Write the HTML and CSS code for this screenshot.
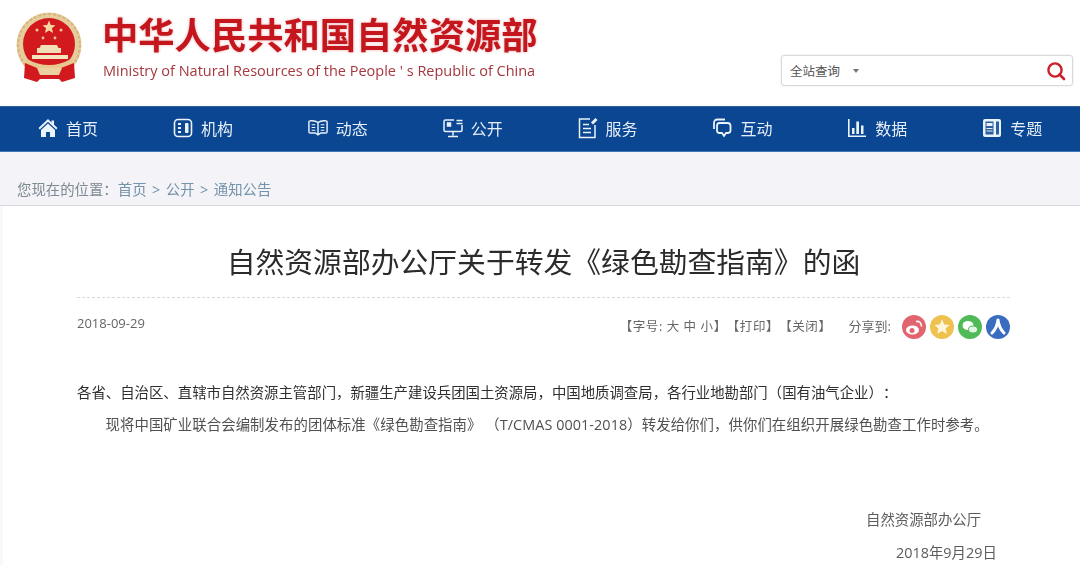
FILE: index.html
```html
<!DOCTYPE html>
<html lang="zh-CN">
<head>
    <meta charset="utf-8">
    <title>自然资源部办公厅关于转发《绿色勘查指南》的函</title>
    <link rel="stylesheet" href="styles.css">
</head>
<body>
    <header class="top">
        <div class="brand">
            <svg class="emblem" width="70" height="76" viewBox="0 0 70 76">
                <circle cx="33" cy="36" r="32.500" fill="#e6cd9e"/>
                <circle cx="33" cy="36" r="31" fill="none" stroke="#d6b47c" stroke-width="2" stroke-dasharray="3 2"/>
                <circle cx="33" cy="35" r="26" fill="#d2191d"/>
                <polygon points="33,11.500 34.800,16 39.500,16.300 35.900,19.300 37.100,24 33,21.400 28.900,24 30.100,19.300 26.500,16.300 31.200,16" fill="#f3d9a0"/>
                <circle cx="21" cy="21" r="1.500" fill="#efc990"/>
                <circle cx="45" cy="21" r="1.500" fill="#efc990"/>
                <circle cx="27" cy="29" r="1.400" fill="#efc990"/>
                <circle cx="39" cy="29" r="1.400" fill="#efc990"/>
                <path d="M25 36h16l1.500 3H45v5H21v-5h2.500z" fill="#f1dfb8"/>
                <path d="M16 46h36v4H16z" fill="#f5e4c0"/>
                <path d="M11 50q22 12 44 0l3 4-12 8H20L8 54z" fill="#e8c88e"/>
                <path d="M9 54l12 5h24l13-5 1 15-13 4-3-3H24l-3 3-13-4z" fill="#d2191d"/>
                <path d="M21 59h25l-3 7H24z" fill="#ecd0a0"/>
            </svg>
            <div class="brand-text">
                <div class="brand-cn">中华人民共和国自然资源部</div>
                <div class="brand-en">Ministry of Natural Resources of the People ' s Republic of China</div>
            </div>
        </div>
        <div class="search">
            <span class="search-label">全站查询</span>
            <span class="search-caret"></span>
            <svg class="search-icon" width="20" height="20" viewBox="0 0 20 20">
                <circle cx="9" cy="9" r="6.600" fill="none" stroke="#c9202b" stroke-width="2.400"/>
                <path d="M13.500 13.500l4.500 4.500" stroke="#c9202b" stroke-width="2.600" stroke-linecap="round"/>
            </svg>
        </div>
    </header>

    <nav class="nav">
        <a class="nav-item">
            <svg width="20" height="20" viewBox="0 0 20 20"><path d="M10 1L0.500 10l1.300 1.400L10 3.800l8.200 7.600 1.300-1.400L16 6.700V2.500h-2.500v1.900z" fill="#eaf2fa"/><path d="M10 5.500l-7 6.400V19h5v-5h4v5h5v-7.100z" fill="#eaf2fa"/></svg>
            <span>首页</span>
        </a>
        <a class="nav-item">
            <svg width="20" height="20" viewBox="0 0 20 20" fill="none" stroke="#eaf2fa"><rect x="1.500" y="1.500" width="17" height="17" rx="3.500" stroke-width="1.600"/><path d="M5 6h3M5 10h3M5 14h3" stroke-width="2"/><path d="M12.500 5.500h2.500v9h-2.500z" fill="#eaf2fa" stroke-width="1"/></svg>
            <span>机构</span>
        </a>
        <a class="nav-item">
            <svg width="20" height="20" viewBox="0 0 22 20" fill="none" stroke="#eaf2fa" stroke-width="1.600"><path d="M11 4Q8 1.500 2.500 2Q1 2 1 3.500V14q0 1.500 1.500 1.500H8L11 17.500 14 15.500H19.500Q21 15.500 21 14V3.500Q21 2 19.500 2 14 1.500 11 4zM11 4v13"/><path d="M4 6.500h4M4 9.500h4M4 12.500h4M14 6.500h4M14 9.500h4M14 12.500h4" stroke-width="1.200"/></svg>
            <span>动态</span>
        </a>
        <a class="nav-item">
            <svg width="20" height="20" viewBox="0 0 20 20" fill="none" stroke="#eaf2fa" stroke-width="1.500"><path d="M11 2H2.500Q1 2 1 3.500V12q0 1.500 1.500 1.500h15Q19 13.500 19 12V7"/><path d="M13.500 2.500h6M13.500 5.500h6M10 13.500V17.500M5 18.500h10"/><path d="M4.500 5h3v3h-3z" fill="#eaf2fa"/></svg>
            <span>公开</span>
        </a>
        <a class="nav-item">
            <svg width="20" height="22" viewBox="0 0 20 22" fill="none" stroke="#eaf2fa" stroke-width="1.500"><path d="M12 2H1.500v18.500H17V8"/><path d="M5 7.500h6M5 11.500h8M5 15.500h8" stroke-width="1.600"/><path d="M14 6.500l4.500-4.500" stroke-width="3"/></svg>
            <span>服务</span>
        </a>
        <a class="nav-item">
            <svg width="20" height="20" viewBox="0 0 20 20" fill="none" stroke="#eaf2fa" stroke-width="1.800"><path d="M2 11V5Q2 1.500 5.500 1.500H13"/><path d="M7.500 5h8Q18.500 5 18.500 8v4.500Q18.500 15 15.500 15h-1.500L12 18l-2-3H7.500Q5 15 5 12.500V8Q5 5 7.500 5z"/></svg>
            <span>互动</span>
        </a>
        <a class="nav-item">
            <svg width="20" height="20" viewBox="0 0 20 20" fill="#eaf2fa"><path d="M1 1h1.600v16.500H19V19H1z"/><path d="M5 10h2.500v6H5zM9.300 3.500H12V16H9.300zM14 7.500h2.500V16H14z"/></svg>
            <span>数据</span>
        </a>
        <a class="nav-item">
            <svg width="20" height="20" viewBox="0 0 20 20"><rect x="1" y="1" width="18" height="18" rx="2" fill="#eaf2fa"/><path d="M3.500 3.500h8v13h-8z" fill="#2c5f9f"/><path d="M4.500 5h6v3h-6zM4.500 10h6v1h-6zM4.500 12.500h6v1h-6z" fill="#eaf2fa"/><path d="M14 3.500h3v13h-3z" fill="#2c5f9f"/></svg>
            <span>专题</span>
        </a>
    </nav>

    <div class="crumbs">
        <span class="crumbs-here">您现在的位置：</span><span class="crumbs-path">首页<i>&gt;</i>公开<i>&gt;</i>通知公告</span>
    </div>

    <main class="article">
        <h1 class="title">自然资源部办公厅关于转发《绿色勘查指南》的函</h1>
        <div class="meta">
            <span class="date">2018-09-29</span>
            <div class="tools">
                <span class="tools-links">【字号: 大 中 小】【打印】【关闭】</span>
                <span class="share-label">分享到:</span>
                <svg class="share" width="24" height="24" viewBox="0 0 24 24"><circle cx="12" cy="12" r="12" fill="#e2646f"/><ellipse cx="10.500" cy="15" rx="6.500" ry="4.500" fill="#fff"/><circle cx="10" cy="15.500" r="2.500" fill="#e2646f"/><path d="M14 6.500q5-1 5.500 5" fill="none" stroke="#fff" stroke-width="1.600"/></svg>
                <svg class="share" width="24" height="24" viewBox="0 0 24 24"><circle cx="12" cy="12" r="12" fill="#efc150"/><polygon points="12,4.500 14.300,9.500 19.500,10 15.600,13.500 16.700,18.700 12,16 7.300,18.700 8.400,13.500 4.500,10 9.700,9.500" fill="#fff6dc"/></svg>
                <svg class="share" width="24" height="24" viewBox="0 0 24 24"><circle cx="12" cy="12" r="12" fill="#4fbb57"/><ellipse cx="10" cy="10.500" rx="5.500" ry="4.500" fill="#fff"/><ellipse cx="15" cy="14.500" rx="4.500" ry="3.500" fill="#e4f5e5" stroke="#4fbb57"/></svg>
                <svg class="share" width="24" height="24" viewBox="0 0 24 24"><circle cx="12" cy="12" r="12" fill="#3a6cbf"/><path d="M12 5q-1 8-6 13M12 5q1 8 6 13" fill="none" stroke="#fff" stroke-width="3" stroke-linecap="round"/></svg>
            </div>
        </div>
        <p class="para para-lead">各省、自治区、直辖市自然资源主管部门，新疆生产建设兵团国土资源局，中国地质调查局，各行业地勘部门（国有油气企业）：</p>
        <p class="para para-indent">现将中国矿业联合会编制发布的团体标准《绿色勘查指南》 （T/CMAS 0001-2018）转发给你们，供你们在组织开展绿色勘查工作时参考。</p>
        <p class="sign sign-org">自然资源部办公厅</p>
        <p class="sign sign-date">2018年9月29日</p>
    </main>
</body>
</html>
```

FILE: styles.css
```css
html, body {
    margin: 0;
    height: 565px;
    overflow: hidden;
    background: #f8f8fa;
}

body {
    font-family: "Open Sans", "Noto Sans CJK SC", sans-serif;
    color: #333;
    text-spacing-trim: space-all;
}

.top {
    height: 106px;
    display: flex;
    justify-content: space-between;
    background: #fff;
}

.brand {
    display: flex;
    padding: 9px 0 0 16px;
}

.emblem {
    filter: blur(.7px);
}

.brand-text {
    margin-left: 17px;
}

.brand-cn {
    font-size: 36.300px;
    line-height: 44px;
    margin-top: 4px;
    margin-left: -1px;
    font-weight: 700;
    color: #c4161c;
    white-space: nowrap;
    text-shadow: 0 0 3px rgba(196, 22, 28, .35);
    filter: blur(.4px);
}

.brand-en {
    font-size: 14.500px;
    line-height: 20px;
    margin-top: 4px;
    color: #a5383f;
    white-space: nowrap;
    filter: blur(.3px);
}

.search {
    width: 282px;
    height: 29px;
    margin: 55px 7px 0 0;
    padding-left: 8px;
    display: flex;
    align-items: center;
    border: 1px solid #d9d9d9;
    border-radius: 3px;
    box-shadow: 0 0 2px rgba(0, 0, 0, .12);
}

.search-label {
    font-size: 12.500px;
    color: #555;
}

.search-caret {
    margin-left: 13px;
    border-top: 4px solid #777;
    border-left: 3px solid transparent;
    border-right: 3px solid transparent;
}

.search-icon {
    margin-left: auto;
    margin-right: 6px;
}

.nav {
    height: 46px;
    padding: 0 0 2px 38px;
    display: flex;
    background: #0a4691;
    border-top: 1px solid #2d5f94;
    border-bottom: 1px solid #3f74b5;
    box-sizing: border-box;
    box-shadow: 0 3px 5px rgba(30, 60, 110, .18);
}

.nav-item {
    width: 134.900px;
    flex: none;
    display: flex;
    align-items: center;
    color: #e6eef7;
    font-size: 16px;
    filter: blur(.3px);
}

.nav-item svg {
    flex: none;
}

.nav-item span {
    margin-left: 8px;
}

.crumbs {
    height: 54px;
    padding-left: 17px;
    box-sizing: border-box;
    line-height: 76px;
    font-size: 14.400px;
    color: #7392ab;
    background: #f4f3f7;
    border-bottom: 1px solid #d5d9dd;
    filter: blur(.3px);
}

.crumbs-here {
    color: #7d8a94;
}

.crumbs-path i {
    font-style: normal;
    margin: 0 5.500px;
}

.article {
    margin-left: 3px;
    padding: 0 70px 0 74px;
    background: #fff;
    filter: blur(.35px);
    height: 360px;
}

.title {
    margin: 0;
    padding: 34px 0 14px;
    font-size: 28.800px;
    line-height: 43px;
    font-weight: 400;
    text-align: center;
    color: #2b2b2b;
    white-space: nowrap;
    border-bottom: 1px dashed #d8d8d8;
}

.meta {
    height: 44px;
    margin-top: 9px;
    display: flex;
    justify-content: space-between;
    font-size: 12.500px;
    color: #666;
}

.date {
    line-height: 34px;
    margin-top: -1px;
    font-size: 13px;
}

.tools {
    display: flex;
    align-items: flex-start;
    gap: 4px;
}

.tools-links {
    line-height: 40px;
    font-size: 12.500px;
    letter-spacing: .6px;
    white-space: nowrap;
}

.share-label {
    margin: 0 7px 0 13px;
    line-height: 39px;
    font-size: 13px;
}

.share {
    margin-top: 8px;
}

.para {
    margin: 0;
    font-size: 14.400px;
    line-height: 32px;
    white-space: nowrap;
}

.para-lead {
    margin-top: 26px;
    color: #2f2f2f;
}

.para-indent {
    padding-left: 28.500px;
    letter-spacing: .07px;
    color: #505050;
}

.sign {
    margin: 0;
    font-size: 14.400px;
    line-height: 33px;
    color: #5c5c5c;
}

.sign-org {
    margin-top: 62px;
    padding-left: 789px;
}

.sign-date {
    padding-left: 819px;
}
```
